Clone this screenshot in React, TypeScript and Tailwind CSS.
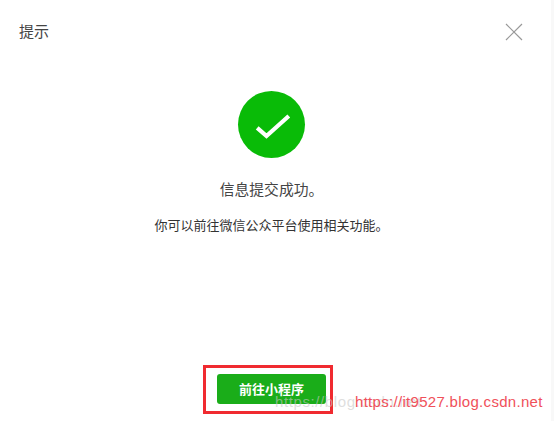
export default function App() {
  const font = { fontFamily: '"Noto Sans CJK SC", sans-serif' };
  return (
    <div className="relative w-[554px] h-[421px] bg-[#f8f8f8] overflow-hidden" style={font}>
      <div className="flex flex-col w-[551px] h-[421px] bg-white">
        <div className="flex items-center justify-between pl-[19px] pr-[28px] pt-[21px] h-[41px]">
          <span className="text-[15px] leading-[18px] text-[#444]">提示</span>
          <svg width="18" height="18" viewBox="0 0 18 18" className="mt-[2px]">
            <path d="M1 1L17 17M17 1L1 17" stroke="#999" strokeWidth="1.2" fill="none" />
          </svg>
        </div>
        <div className="flex flex-col items-center pt-[50px] pr-[8px]">
          <div className="flex items-center justify-center w-[67px] h-[67px] rounded-full bg-[#09bb07]">
            <svg width="38" height="28" viewBox="0 0 38 28">
              <path d="M4.2 16.8L13.5 25L35.8 5" stroke="#fff" strokeWidth="4.2" fill="none" />
            </svg>
          </div>
          <div className="mt-[21px] text-[14.8px] leading-[20px] text-[#444]">信息提交成功。</div>
          <div className="mt-[17px] text-[13px] leading-[18px] text-[#333]">你可以前往微信公众平台使用相关功能。</div>
        </div>
        <div className="flex justify-center mt-[131px] pr-[15px]">
          <div className="flex items-center justify-center w-[130px] h-[49px] border-[3px] border-[#f02a30] pl-[7px]">
            <button className="w-[109px] h-[30px] mt-[-1px] rounded-[3px] bg-[#1aad19] text-white text-[13px] font-bold">前往小程序</button>
          </div>
        </div>
      </div>
      <span className="absolute left-[275px] top-[393px] text-[15px] leading-[18px] tracking-[0.6px] text-[#c8c8c8]/60 whitespace-nowrap" style={{ fontFamily: '"Liberation Sans", sans-serif' }}>https://blog.csdn.net</span>
      <span className="absolute left-[355px] top-[393px] text-[15px] leading-[18px] tracking-[0.3px] text-[#f0505a] whitespace-nowrap" style={{ fontFamily: '"Liberation Sans", sans-serif' }}>https://it9527.blog.csdn.net</span>
    </div>
  );
}
